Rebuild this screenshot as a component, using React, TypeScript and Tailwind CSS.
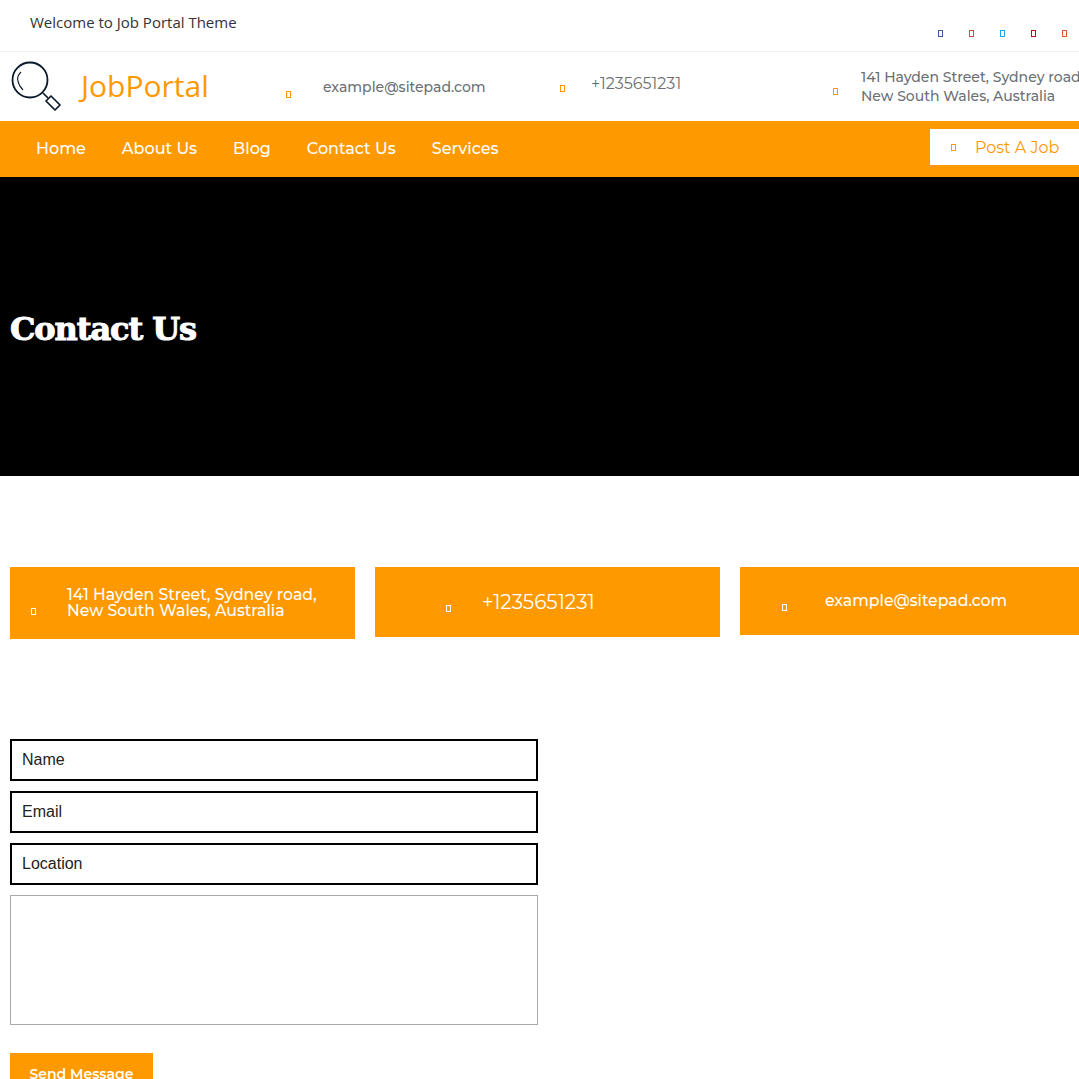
const wide = "font-['Montserrat','Inter','Noto_Sans',sans-serif]";

function Tofu({ color, className = "" }: { color: string; className?: string }) {
  return <span className={`block h-[7px] w-[5px] shrink-0 border ${color} ${className}`} />;
}

const navLinks = ["Home", "About Us", "Blog", "Contact Us", "Services"];

const socials = [
  "border-[#3b5998]",
  "border-[#dd4b39]",
  "border-[#1da1f2]",
  "border-[#bd081c]",
  "border-[#e4572e]",
];

function Field({ label }: { label: string }) {
  return (
    <input
      readOnly
      placeholder={label}
      className="h-[42px] w-full border-2 border-black bg-white pl-[10px] font-['Liberation_Sans',sans-serif] text-base text-black placeholder:text-[#222]"
    />
  );
}

export default function App() {
  return (
    <div className="h-[1079px] w-[1079px] overflow-hidden bg-white">
      <div className="flex h-[52px] justify-between border-b border-[#f1f1f1] pl-[30px]">
        <p className="pt-[10px] font-['Open_Sans',sans-serif] text-[15px] leading-[24px] text-[#333]">
          Welcome to Job Portal Theme
        </p>
        <div className="flex gap-[26px] pr-[12px] pt-[30px]">
          {socials.map((c) => (
            <Tofu key={c} color={c} />
          ))}
        </div>
      </div>

      <div className="flex h-[69px] w-[1120px] items-start pl-[11px]">
        <svg viewBox="0 0 50 50" className="mt-[9px] h-[50px] w-[50px] shrink-0" fill="none" stroke="#0b1a2b" strokeWidth="1.7">
          <circle cx="19" cy="19" r="17.5" strokeWidth="1.8" />
          <path d="M10 11c-3 3-4 6-3 9 .5 3 2 6 5 9" strokeWidth="1.1" />
          <path d="M32 32l5 5" />
          <path d="M35 40l5-5 9 9-5 5z" strokeLinejoin="round" />
        </svg>
        <span className="ml-5 mt-[12px] w-[205px] shrink-0 font-['Open_Sans',sans-serif] text-[30px] leading-[44px] text-[#ff9900]">
          JobPortal
        </span>
        <Tofu color="border-[#ff9900]" className="mt-[39px]" />
        <span className={`ml-8 mt-[24px] w-[237px] shrink-0 text-[14px] font-medium leading-[22px] text-[#6b7075] ${wide}`}>
          example@sitepad.com
        </span>
        <Tofu color="border-[#ff9900]" className="mt-[33px]" />
        <span className={`ml-[26px] mt-[21px] w-[242px] shrink-0 text-[16px] leading-[22px] text-[#6b7075] ${wide}`}>
          +1235651231
        </span>
        <Tofu color="border-[#ff9900]" className="mt-[36px]" />
        <p className={`ml-[23px] mt-[16px] shrink-0 text-[14px] font-medium leading-[19px] text-[#6b7075] ${wide}`}>
          141 Hayden Street, Sydney road,
          <br />
          New South Wales, Australia
        </p>
      </div>

      <nav className="flex h-[56px] items-start justify-between bg-[#ff9900] pl-9 pt-2">
        <ul className={`flex gap-9 pt-[8px] text-[16px] font-medium leading-[24px] text-white ${wide}`}>
          {navLinks.map((l) => (
            <li key={l}>{l}</li>
          ))}
        </ul>
        <div className="flex h-[36px] w-[149px] items-center bg-white pl-[21px]">
          <Tofu color="border-[#ff9900]" />
          <span className={`ml-[19px] pt-[2px] text-[16px] text-[#ff9900] ${wide}`}>Post A Job</span>
        </div>
      </nav>

      <section className="flex h-[299px] items-center bg-black pl-[10px]">
        <h1 className="pt-[5px] font-['DejaVu_Serif',serif] text-[32px] font-bold tracking-[-1.1px] text-white [-webkit-text-stroke:1px_white]">
          Contact Us
        </h1>
      </section>

      <div className={`mt-[91px] flex w-[1100px] items-start gap-5 pl-[10px] text-white ${wide}`}>
        <div className="flex h-[72px] w-[345px] items-center bg-[#ff9900] pl-[21px]">
          <Tofu color="border-white" className="mt-[17px]" />
          <p className="ml-[31px] text-[15.7px] font-medium leading-[16px]">
            141 Hayden Street, Sydney road,
            <br />
            New South Wales, Australia
          </p>
        </div>
        <div className="flex h-[70px] w-[345px] items-center bg-[#ff9900] pl-[71px]">
          <Tofu color="border-white" className="mt-[12px]" />
          <span className="ml-[31px] text-[20px]">+1235651231</span>
        </div>
        <div className="flex h-[68px] w-[345px] items-center bg-[#ff9900] pl-[42px]">
          <Tofu color="border-white" className="mt-[12px]" />
          <span className="ml-[38px] text-[15.7px] font-medium">example@sitepad.com</span>
        </div>
      </div>

      <form className="ml-[10px] mt-[100px] flex w-[528px] flex-col gap-[10px]">
        <Field label="Name" />
        <Field label="Email" />
        <Field label="Location" />
        <textarea readOnly className="block h-[130px] w-full resize-none border border-[#a9a9a9] bg-white" />
        <button
          type="button"
          className={`mt-[18px] h-[42px] w-[143px] bg-[#ff9900] text-[14px] font-semibold text-white ${wide}`}
        >
          Send Message
        </button>
      </form>
    </div>
  );
}
